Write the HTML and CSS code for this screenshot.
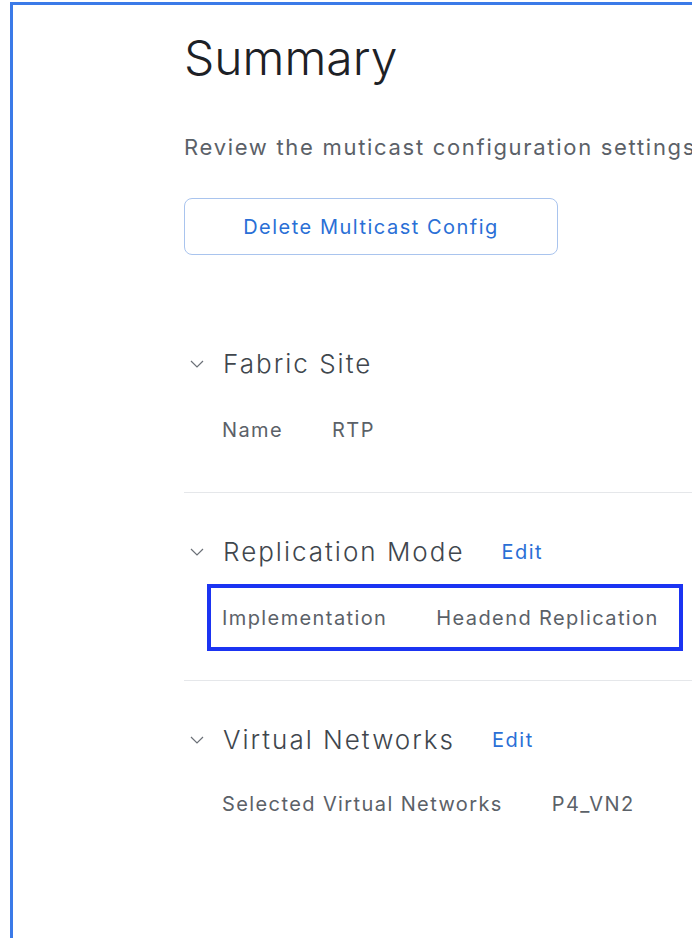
FILE: index.html
```html
<!DOCTYPE html>
<html lang="en">
<head>
<meta charset="utf-8">
<title>Summary</title>
<link rel="stylesheet" href="styles.css">
</head>
<body>
<div class="frame">
  <main class="summary">
    <h1 class="title">Summary</h1>
    <p class="intro">Review the muticast configuration settings</p>
    <button class="btn-outline" type="button">Delete Multicast Config</button>

    <section class="group first">
      <div class="group-head">
        <svg class="chev" viewBox="0 0 14 8" width="14" height="8"><path d="M1 1l6 6 6-6" fill="none" stroke="#6b7077" stroke-width="1.2"/></svg>
        <h2 class="group-title">Fabric Site</h2>
      </div>
      <div class="row">
        <span class="label">Name</span>
        <span class="value">RTP</span>
      </div>
    </section>

    <section class="group">
      <div class="group-head">
        <svg class="chev" viewBox="0 0 14 8" width="14" height="8"><path d="M1 1l6 6 6-6" fill="none" stroke="#6b7077" stroke-width="1.2"/></svg>
        <h2 class="group-title">Replication Mode</h2>
        <a class="edit" href="#">Edit</a>
      </div>
      <div class="row highlight">
        <span class="label">Implementation</span>
        <span class="value">Headend Replication</span>
      </div>
    </section>

    <section class="group">
      <div class="group-head">
        <svg class="chev" viewBox="0 0 14 8" width="14" height="8"><path d="M1 1l6 6 6-6" fill="none" stroke="#6b7077" stroke-width="1.2"/></svg>
        <h2 class="group-title">Virtual Networks</h2>
        <a class="edit" href="#">Edit</a>
      </div>
      <div class="row">
        <span class="label">Selected Virtual Networks</span>
        <span class="value">P4_VN2</span>
      </div>
    </section>
  </main>
</div>
</body>
</html>
```

FILE: styles.css
```css
html, body {
  margin: 0;
  padding: 0;
  background: #ffffff;
  overflow: hidden;
}

body {
  font-family: Inter, "Noto Sans", sans-serif;
  color: #5b6168;
}

/* outer panel edge */
.frame {
  margin: 2px 0 0 10px;
  height: 960px;
  border-top: 3px solid #3b7ae8;
  border-left: 3px solid #3b7ae8;
  overflow: hidden;
}

.summary {
  padding-left: 171px;
  width: 508px;
}

.title {
  margin: 0;
  padding-top: 24px;
  font-size: 48px;
  font-weight: 300;
  line-height: 58px;
  color: #1d2126;
}

.intro {
  margin: 46px 0 0;
  font-size: 22px;
  font-weight: 400;
  line-height: 28px;
  letter-spacing: 1.7px;
  color: #5b6168;
  white-space: nowrap;
}

.btn-outline {
  display: block;
  margin-top: 37px;
  width: 374px;
  height: 57px;
  border: 1px solid #a9c4ee;
  border-radius: 8px;
  background: #fff;
  color: #2a6fd6;
  font-family: inherit;
  font-size: 20px;
  font-weight: 400;
  letter-spacing: 1.5px;
}

/* collapsible summary groups */
.group {
  border-bottom: 1px solid #e5e7ea;
  padding: 42px 0 49px;
}

.group.first {
  margin-top: 50px;
}

.group:last-child {
  border-bottom: 0;
}

.group-head {
  display: flex;
  align-items: center;
}

.chev {
  margin: 0 19px 0 6px;
}

.group-title {
  margin: 0;
  font-size: 26px;
  font-weight: 300;
  line-height: 34px;
  letter-spacing: 2px;
  color: #40464d;
}

.edit {
  margin-left: 37px;
  font-size: 20px;
  letter-spacing: 1.5px;
  color: #2a6fd6;
  text-decoration: none;
}

.row {
  display: flex;
  gap: 49px;
  width: max-content;
  margin: 36px 0 0 38px;
  font-size: 20px;
  line-height: 26px;
  letter-spacing: 1.4px;
  color: #5b6168;
}

.group:last-child .row {
  margin-top: 34px;
}

/* emphasis box drawn around one row */
.row.highlight {
  position: relative;
}

.row.highlight::after {
  content: "";
  position: absolute;
  top: -21px;
  bottom: -20px;
  left: -15px;
  right: -24px;
  border: 4px solid #1b34f2;
}
```
